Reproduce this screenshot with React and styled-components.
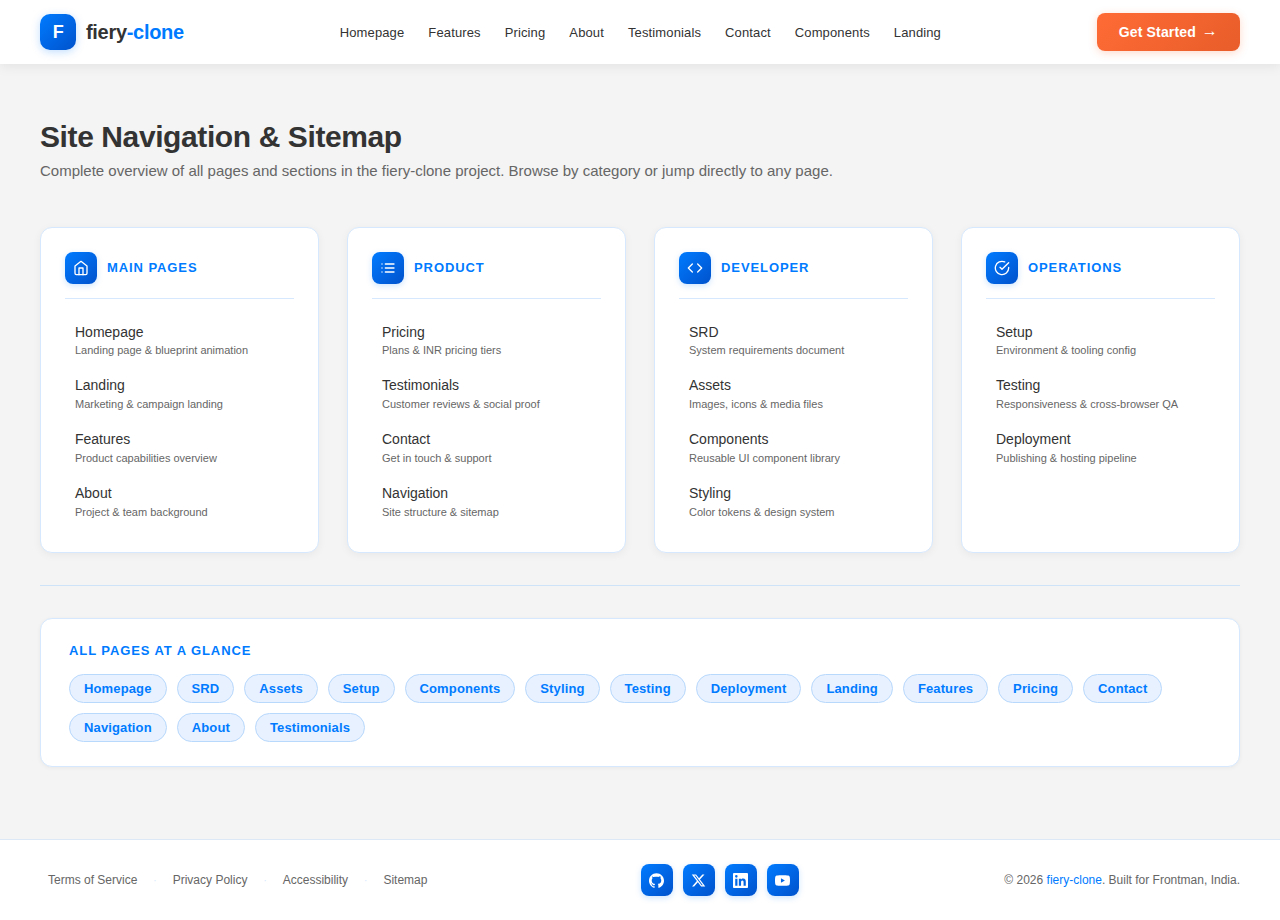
import styled, { createGlobalStyle, css } from 'styled-components'

const Global = createGlobalStyle`
  * {
    margin: 0;
    padding: 0;
    box-sizing: border-box;
  }

  body {
    --primary: #007bff;
    --primary-dark: #0052cc;
    --text: #333333;
    --muted: #666666;
    --line: #d6e8fd;
    background-color: #f4f4f4;
    color: var(--text);
    font-family: "Liberation Sans", Arial, sans-serif;
    line-height: 1.6;
  }

  a {
    color: inherit;
    text-decoration: none;
  }
`

const Page = styled.div`
  display: flex;
  flex-direction: column;
  min-height: 100vh;
`

const gradient = css`
  background: linear-gradient(135deg, var(--primary), var(--primary-dark));
  color: white;
`

const Header = styled.header`
  display: flex;
  align-items: center;
  justify-content: space-between;
  height: 64px;
  padding: 0 40px;
  background-color: white;
  box-shadow: 0 2px 12px rgba(0, 0, 0, 0.08);
`

const Brand = styled.a`
  display: flex;
  align-items: center;
  gap: 10px;
  font-size: 20px;
  font-weight: 700;
  letter-spacing: -0.3px;

  & em {
    color: var(--primary);
    font-style: normal;
  }
`

const Logo = styled.span`
  ${gradient}
  display: grid;
  place-items: center;
  width: 36px;
  height: 36px;
  border-radius: 10px;
  box-shadow: 0 2px 8px rgba(0, 123, 255, 0.25);
  font-size: 18px;
`

const Nav = styled.nav`
  display: flex;
  gap: 24px;
  padding-top: 2px;
  font-size: 13px;
  letter-spacing: 0.13px;
`

const Cta = styled.a`
  display: flex;
  align-items: center;
  gap: 6px;
  height: 38px;
  padding: 0 22px;
  border-radius: 8px;
  background: linear-gradient(135deg, #ff6b35, #e85d2a);
  box-shadow: 0 2px 8px rgba(255, 107, 53, 0.25);
  color: white;
  font-size: 14px;
  font-weight: 700;
  letter-spacing: 0.14px;
`

const Arrow = styled.span`
  padding-bottom: 2px;
  font-size: 16px;
  line-height: 1;
`

const Main = styled.main`
  flex: 1;
  padding: 52px 40px 72px;
`

const Title = styled.h1`
  font-size: 30px;
  line-height: 42px;
  letter-spacing: -0.4px;
`

const Lead = styled.p`
  margin-bottom: 44px;
  color: var(--muted);
  font-size: 15px;
  line-height: 25px;
`

const Grid = styled.div`
  display: grid;
  grid-template-columns: repeat(4, 1fr);
  gap: 28px;
`

const panel = css`
  border: 1px solid var(--line);
  border-radius: 12px;
  background-color: white;
`

const Card = styled.section`
  ${panel}
  padding: 24px 24px 24.4px;
  box-shadow: 0 2px 8px rgba(0, 0, 0, 0.05);
`

const CardHead = styled.div`
  display: flex;
  align-items: center;
  gap: 10px;
  margin-bottom: 16px;
  padding-bottom: 14px;
  border-bottom: 1px solid var(--line);
`

const Tile = styled.span`
  ${gradient}
  display: grid;
  place-items: center;
  width: 32px;
  height: 32px;
  border-radius: 8px;
  box-shadow: 0 2px 6px rgba(0, 123, 255, 0.2);
`

const Caption = styled.h2`
  color: var(--primary);
  font-size: 13px;
  letter-spacing: 0.91px;
`

const Links = styled.ul`
  display: flex;
  flex-direction: column;
  gap: 2px;
  list-style-type: none;
`

const LinkItem = styled.li`
  padding: 7.6px 10px 8.25px;
  font-size: 14px;
  line-height: 18px;

  & > small {
    display: block;
    margin-top: 1.85px;
    color: var(--muted);
    font-size: 11px;
    line-height: 16px;
  }
`

const Divider = styled.hr`
  margin: 32px 0;
  border: none;
  border-top: 1px solid #cfe3f8;
`

const Glance = styled.section`
  ${panel}
  padding: 22px 28px 24px;
  box-shadow: 0 1px 4px rgba(0, 0, 0, 0.05);
`

const Tags = styled.div`
  display: flex;
  flex-wrap: wrap;
  gap: 10px;
  margin-top: 12px;
`

const Tag = styled.a`
  height: 29px;
  padding: 0 14px;
  border: 1px solid #b8d8fc;
  border-radius: 20px;
  background-color: #e7f1ff;
  color: var(--primary);
  font-size: 13px;
  font-weight: 700;
  line-height: 27px;
  letter-spacing: 0.13px;
`

const Footer = styled.footer`
  display: flex;
  align-items: center;
  justify-content: space-between;
  padding: 24px 40px;
  border-top: 1px solid #dce8f5;
  background-color: white;
  color: var(--muted);
  font-size: 12px;
`

const Legal = styled.div`
  display: flex;
  align-items: center;
  gap: 8px;
  padding-top: 2px;

  & > a {
    padding: 0 8px;
  }

  & > span {
    color: #d6e8fd;
    font-size: 10px;
  }
`

const Socials = styled.div`
  display: flex;
  gap: 10px;
`

const Copy = styled.p`
  padding-top: 2px;

  & > a {
    color: var(--primary);
  }
`

const Stroke = ({ children }) => (
  <svg width="16" height="16" viewBox="0 0 24 24" fill="none" stroke="currentColor"
    strokeWidth="2" strokeLinecap="round" strokeLinejoin="round">
    {children}
  </svg>
)

const Solid = ({ d }) => (
  <svg width="15" height="15" viewBox="0 0 24 24" fill="currentColor">
    <path d={d} />
  </svg>
)

const nav = ['Homepage', 'Features', 'Pricing', 'About', 'Testimonials', 'Contact', 'Components', 'Landing']

const cards = [
  {
    title: 'MAIN PAGES',
    icon: <><path d="M3 9l9-7 9 7v11a2 2 0 0 1-2 2H5a2 2 0 0 1-2-2z" /><polyline points="9 22 9 12 15 12 15 22" /></>,
    links: [
      ['Homepage', 'Landing page & blueprint animation'],
      ['Landing', 'Marketing & campaign landing'],
      ['Features', 'Product capabilities overview'],
      ['About', 'Project & team background'],
    ],
  },
  {
    title: 'PRODUCT',
    icon: <path d="M8 6h13M8 12h13M8 18h13M3 6h.01M3 12h.01M3 18h.01" />,
    links: [
      ['Pricing', 'Plans & INR pricing tiers'],
      ['Testimonials', 'Customer reviews & social proof'],
      ['Contact', 'Get in touch & support'],
      ['Navigation', 'Site structure & sitemap'],
    ],
  },
  {
    title: 'DEVELOPER',
    icon: <><polyline points="16 18 22 12 16 6" /><polyline points="8 6 2 12 8 18" /></>,
    links: [
      ['SRD', 'System requirements document'],
      ['Assets', 'Images, icons & media files'],
      ['Components', 'Reusable UI component library'],
      ['Styling', 'Color tokens & design system'],
    ],
  },
  {
    title: 'OPERATIONS',
    icon: <><path d="M22 11.08V12a10 10 0 1 1-5.93-9.14" /><polyline points="22 4 12 14.01 9 11.01" /></>,
    links: [
      ['Setup', 'Environment & tooling config'],
      ['Testing', 'Responsiveness & cross-browser QA'],
      ['Deployment', 'Publishing & hosting pipeline'],
    ],
  },
]

const tags = [
  'Homepage', 'SRD', 'Assets', 'Setup', 'Components', 'Styling', 'Testing', 'Deployment',
  'Landing', 'Features', 'Pricing', 'Contact', 'Navigation', 'About', 'Testimonials',
]

const socials = {
  github: 'M12 .297c-6.63 0-12 5.373-12 12 0 5.303 3.438 9.8 8.205 11.385.6.113.82-.258.82-.577 0-.285-.01-1.04-.015-2.04-3.338.724-4.042-1.61-4.042-1.61C4.422 18.07 3.633 17.7 3.633 17.7c-1.087-.744.084-.729.084-.729 1.205.084 1.838 1.236 1.838 1.236 1.07 1.835 2.809 1.305 3.495.998.108-.776.417-1.305.76-1.605-2.665-.3-5.466-1.332-5.466-5.93 0-1.31.465-2.38 1.235-3.22-.135-.303-.54-1.523.105-3.176 0 0 1.005-.322 3.3 1.23.96-.267 1.98-.399 3-.405 1.02.006 2.04.138 3 .405 2.28-1.552 3.285-1.23 3.285-1.23.645 1.653.24 2.873.12 3.176.765.84 1.23 1.91 1.23 3.22 0 4.61-2.805 5.625-5.475 5.92.42.36.81 1.096.81 2.22 0 1.606-.015 2.896-.015 3.286 0 .315.21.69.825.57C20.565 22.092 24 17.592 24 12.297c0-6.627-5.373-12-12-12',
  x: 'M18.244 2.25h3.308l-7.227 8.26 8.502 11.24H16.17l-5.214-6.817L4.99 21.75H1.68l7.73-8.835L1.254 2.25H8.08l4.713 6.231zm-1.161 17.52h1.833L7.084 4.126H5.117z',
  linkedin: 'M20.447 20.452h-3.554v-5.569c0-1.328-.027-3.037-1.852-3.037-1.853 0-2.136 1.445-2.136 2.939v5.667H9.351V9h3.414v1.561h.046c.477-.9 1.637-1.85 3.37-1.85 3.601 0 4.267 2.37 4.267 5.455v6.286zM5.337 7.433a2.062 2.062 0 0 1-2.063-2.065 2.064 2.064 0 1 1 2.063 2.065zm1.782 13.019H3.555V9h3.564v11.452zM22.225 0H1.771C.792 0 0 .774 0 1.729v20.542C0 23.227.792 24 1.771 24h20.451C23.2 24 24 23.227 24 22.271V1.729C24 .774 23.2 0 22.222 0h.003z',
  youtube: 'M23.498 6.186a3.016 3.016 0 0 0-2.122-2.136C19.505 3.545 12 3.545 12 3.545s-7.505 0-9.377.505A3.017 3.017 0 0 0 .502 6.186C0 8.07 0 12 0 12s0 3.93.502 5.814a3.016 3.016 0 0 0 2.122 2.136c1.871.505 9.376.505 9.376.505s7.505 0 9.377-.505a3.015 3.015 0 0 0 2.122-2.136C24 15.93 24 12 24 12s0-3.93-.502-5.814zM9.545 15.568V8.432L15.818 12l-6.273 3.568z',
}

export default function App() {
  return (
    <Page>
      <Global />
      <Header>
        <Brand href="#">
          <Logo>F</Logo>
          <span>fiery<em>-clone</em></span>
        </Brand>
        <Nav>
          {nav.map((name) => <a href="#" key={name}>{name}</a>)}
        </Nav>
        <Cta href="#">Get Started <Arrow>→</Arrow></Cta>
      </Header>
      <Main>
        <Title>Site Navigation &amp; Sitemap</Title>
        <Lead>
          Complete overview of all pages and sections in the fiery-clone project. Browse by category or jump directly to any page.
        </Lead>
        <Grid>
          {cards.map(({ title, icon, links }) => (
            <Card key={title}>
              <CardHead>
                <Tile><Stroke>{icon}</Stroke></Tile>
                <Caption>{title}</Caption>
              </CardHead>
              <Links>
                {links.map(([name, text]) => (
                  <LinkItem key={name}>{name}<small>{text}</small></LinkItem>
                ))}
              </Links>
            </Card>
          ))}
        </Grid>
        <Divider />
        <Glance>
          <Caption>ALL PAGES AT A GLANCE</Caption>
          <Tags>
            {tags.map((name) => <Tag href="#" key={name}>{name}</Tag>)}
          </Tags>
        </Glance>
      </Main>
      <Footer>
        <Legal>
          <a href="#">Terms of Service</a>
          <span>·</span>
          <a href="#">Privacy Policy</a>
          <span>·</span>
          <a href="#">Accessibility</a>
          <span>·</span>
          <a href="#">Sitemap</a>
        </Legal>
        <Socials>
          {Object.entries(socials).map(([name, d]) => (
            <Tile key={name}><Solid d={d} /></Tile>
          ))}
        </Socials>
        <Copy>© 2026 <a href="#">fiery-clone</a>. Built for Frontman, India.</Copy>
      </Footer>
    </Page>
  )
}
